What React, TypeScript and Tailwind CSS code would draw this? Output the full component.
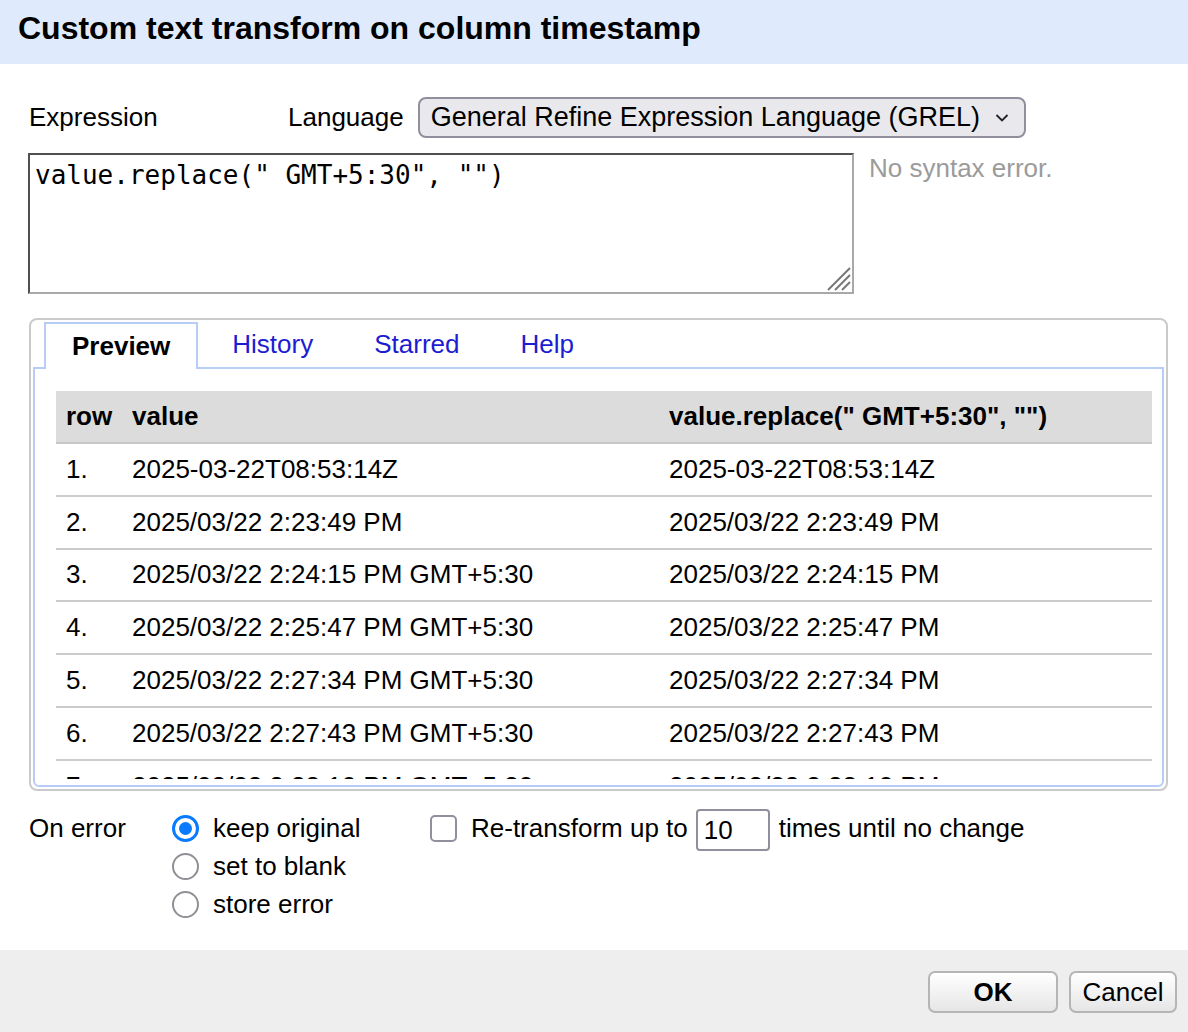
import React from "react";

const rows: [string, string, string][] = [
  ["1.", "2025-03-22T08:53:14Z", "2025-03-22T08:53:14Z"],
  ["2.", "2025/03/22 2:23:49 PM", "2025/03/22 2:23:49 PM"],
  ["3.", "2025/03/22 2:24:15 PM GMT+5:30", "2025/03/22 2:24:15 PM"],
  ["4.", "2025/03/22 2:25:47 PM GMT+5:30", "2025/03/22 2:25:47 PM"],
  ["5.", "2025/03/22 2:27:34 PM GMT+5:30", "2025/03/22 2:27:34 PM"],
  ["6.", "2025/03/22 2:27:43 PM GMT+5:30", "2025/03/22 2:27:43 PM"],
  ["7.", "2025/03/22 2:28:10 PM GMT+5:30", "2025/03/22 2:28:10 PM"],
  ["8.", "2025/03/22 2:29:02 PM GMT+5:30", "2025/03/22 2:29:02 PM"],
];

function Radio({ checked }: { checked?: boolean }) {
  if (checked) {
    return (
      <div className="w-[27px] h-[27px] rounded-full border-[3px] border-[#0a7aff] flex items-center justify-center bg-white shrink-0">
        <div className="w-[13px] h-[13px] rounded-full bg-[#0a7aff]" />
      </div>
    );
  }
  return <div className="w-[27px] h-[27px] rounded-full border-2 border-[#8f8f95] bg-white shrink-0" />;
}

export default function App() {
  return (
    <div className="w-[1188px] h-[1032px] flex flex-col bg-white text-black text-[26px] font-['Liberation_Sans',Arial,sans-serif] overflow-hidden">
      {/* Header */}
      <div className="h-[64px] bg-[#dfeafc] flex items-center px-[18px] pb-[8px] shrink-0">
        <h1 className="text-[32px] font-bold leading-none">Custom text transform on column timestamp</h1>
      </div>

      {/* Body */}
      <div className="pl-[28px] pr-[21px] flex flex-col">
        {/* Expression / Language row */}
        <div className="mt-[33px] flex items-center h-[41px]">
          <div className="w-[260px] pl-[1px]">Expression</div>
          <div>Language</div>
          <div className="ml-[14px] w-[608px] h-[41px] rounded-[8px] border-2 border-[#8f8f9d] bg-[#e9e9ed] flex items-center pl-[11px] pr-[14px]">
            <span className="flex-1 leading-none text-[27px]">General Refine Expression Language (GREL)</span>
            <svg width="14" height="10" viewBox="0 0 14 10" className="mr-[1px]">
              <polyline points="1.5,2 7,7.5 12.5,2" fill="none" stroke="#222" strokeWidth="1.8" />
            </svg>
          </div>
        </div>

        {/* Textarea row */}
        <div className="mt-[15px] flex items-start">
          <div className="relative w-[826px] h-[141px] border-2 border-t-[#505050] border-l-[#505050] border-r-[#a9a9a9] border-b-[#a9a9a9] bg-white pl-[5px] pt-[5px]">
            <div className="font-['DejaVu_Sans_Mono',Menlo,monospace] text-[26px] leading-[30px]">
              value.replace(" GMT+5:30", "")
            </div>
            <svg width="26" height="26" viewBox="0 0 26 26" className="absolute right-[1px] bottom-[1px]">
              <line x1="3" y1="25" x2="25" y2="3" stroke="#777" strokeWidth="2" />
              <line x1="10" y1="25" x2="25" y2="10" stroke="#777" strokeWidth="2" />
              <line x1="17" y1="25" x2="25" y2="17" stroke="#777" strokeWidth="2" />
            </svg>
          </div>
          <div className="ml-[15px] text-[#9b9b9b] leading-[30px]">No syntax error.</div>
        </div>

        {/* Tabs */}
        <div className="mt-[24px] ml-[1px] w-[1139px] h-[473px] border-2 border-[#cacaca] rounded-[8px] p-[2px] flex flex-col">
          <div className="flex items-end pl-[11px] relative z-10">
            <div className="h-[47px] px-[26px] border-2 border-b-0 border-[#b8cdf5] bg-white font-bold flex items-center -mb-[2px]">
              Preview
            </div>
            <div className="h-[45px] px-[28px] ml-[6px] text-[#1c1cd2] flex items-center">History</div>
            <div className="h-[45px] px-[28px] ml-[5px] text-[#1c1cd2] flex items-center">Starred</div>
            <div className="h-[45px] px-[28px] ml-[5px] text-[#1c1cd2] flex items-center">Help</div>
          </div>
          <div className="flex-1 border-2 border-[#b8cdf5] rounded-b-[6px] pl-[21px] pr-[10px] pt-[22px] pb-[6px] flex flex-col min-h-0">
            <div className="flex-1 overflow-hidden">
              <div className="flex h-[53px] bg-[#dcdcdc] border-b-2 border-[#c8c8c8] font-bold items-center">
                <div className="w-[66px] pl-[10px]">row</div>
                <div className="w-[537px] pl-[10px]">value</div>
                <div className="flex-1 pl-[10px]">value.replace(" GMT+5:30", "")</div>
              </div>
              {rows.map((r) => (
                <div key={r[0]} className="flex h-[52.8px] border-b-2 border-[#cbcbcb] items-center">
                  <div className="w-[66px] pl-[10px]">{r[0]}</div>
                  <div className="w-[537px] pl-[10px]">{r[1]}</div>
                  <div className="flex-1 pl-[10px]">{r[2]}</div>
                </div>
              ))}
            </div>
          </div>
        </div>

        {/* On error options */}
        <div className="mt-[18px] flex items-start">
          <div className="w-[144px] pl-[1px] h-[38px] flex items-center">On error</div>
          <div className="w-[258px] flex flex-col">
            <div className="h-[38px] flex items-center gap-[14px]">
              <Radio checked />
              <span>keep original</span>
            </div>
            <div className="h-[38px] flex items-center gap-[14px]">
              <Radio />
              <span>set to blank</span>
            </div>
            <div className="h-[38px] flex items-center gap-[14px]">
              <Radio />
              <span>store error</span>
            </div>
          </div>
          <div className="h-[38px] flex items-center">
            <div className="w-[27px] h-[27px] rounded-[5px] border-2 border-[#8f8f9d] bg-white shrink-0" />
            <span className="ml-[14px]">Re-transform up to</span>
            <div className="ml-[8px] w-[74px] h-[42px] rounded-[4px] border-2 border-[#8f8f9d] flex items-center pl-[6px] mt-[4px]">
              10
            </div>
            <span className="ml-[9px]">times until no change</span>
          </div>
        </div>
      </div>

      {/* Footer */}
      <div className="mt-auto h-[82px] bg-[#eeeeee] flex justify-end items-start pt-[21px] pr-[11px] gap-[11px] shrink-0">
        <button className="w-[130px] h-[42px] rounded-[7px] border-2 border-[#b5b5b5] bg-gradient-to-b from-[#ffffff] to-[#e6e6e6] font-bold text-[26px] flex items-center justify-center">
          OK
        </button>
        <button className="w-[108px] h-[42px] rounded-[7px] border-2 border-[#b5b5b5] bg-gradient-to-b from-[#ffffff] to-[#e6e6e6] text-[26px] flex items-center justify-center">
          Cancel
        </button>
      </div>
    </div>
  );
}
